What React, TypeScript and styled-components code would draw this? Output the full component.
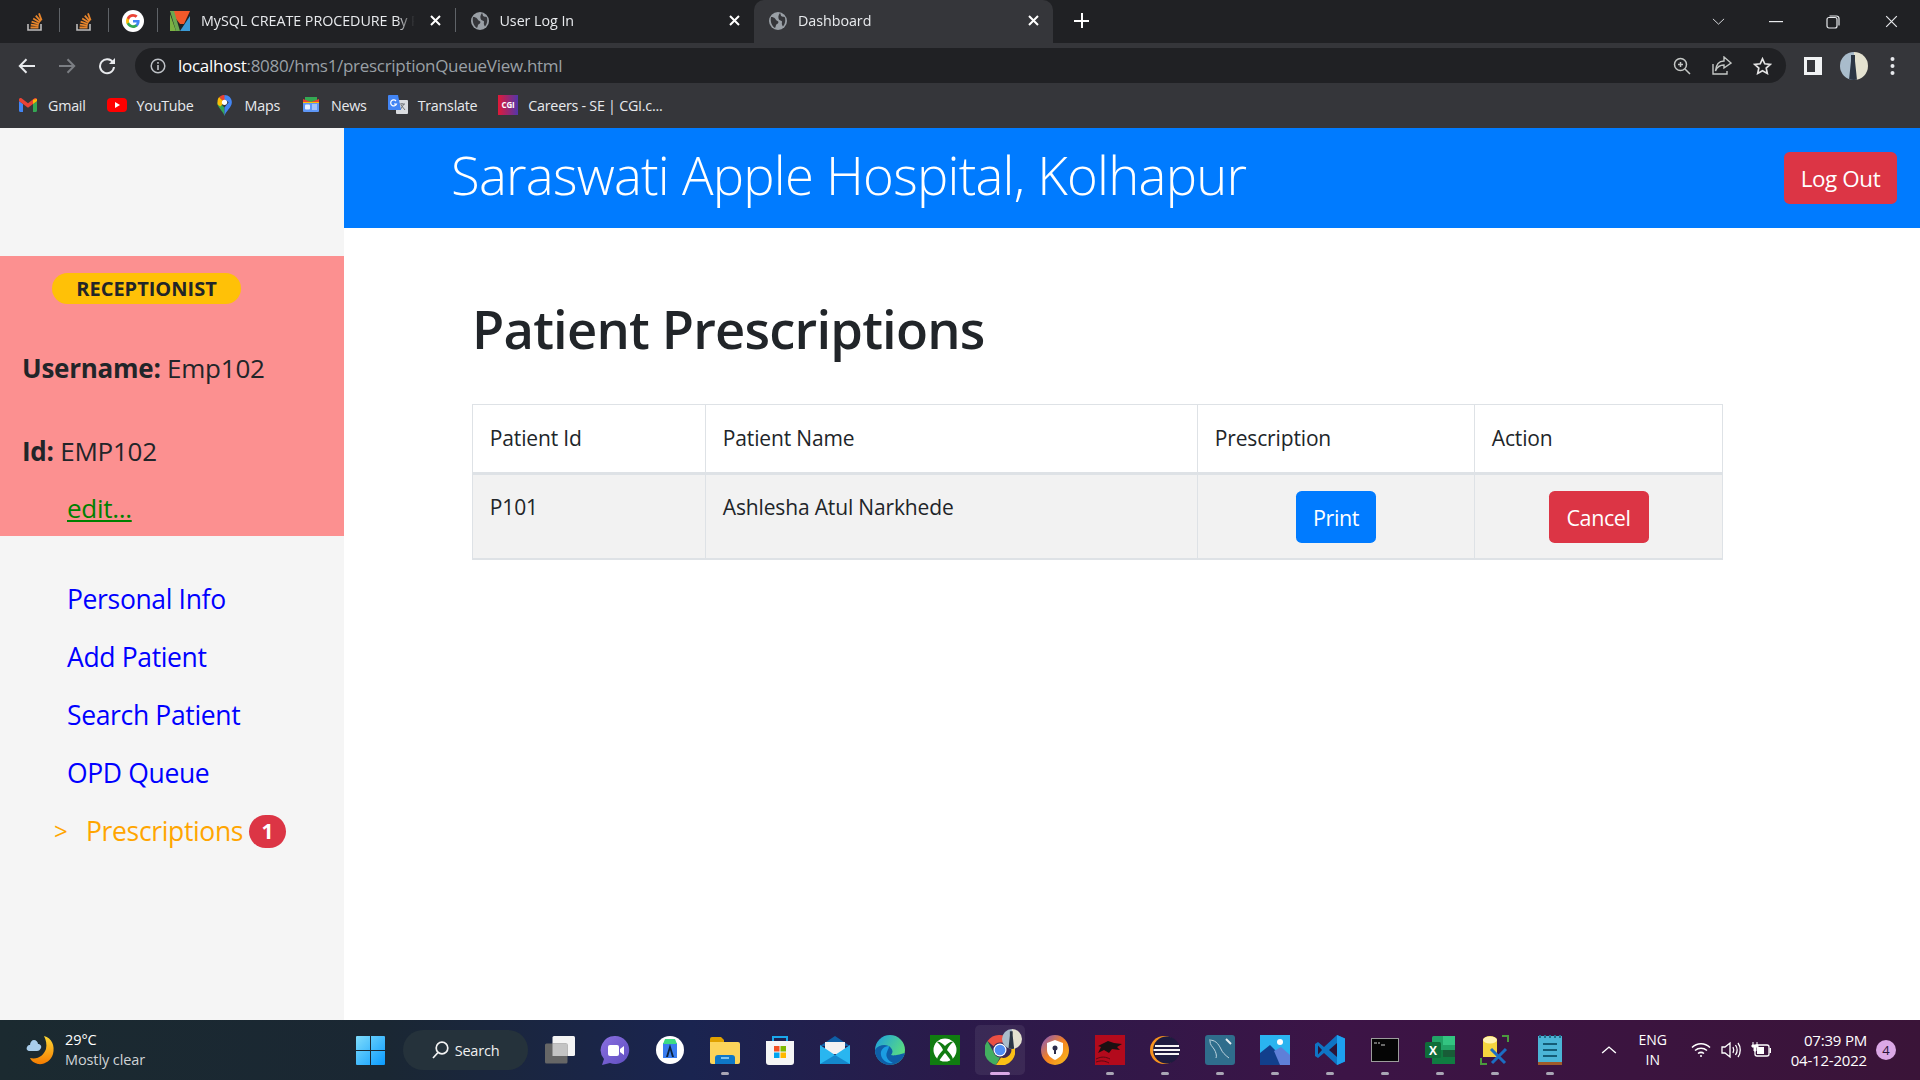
import type { FC, ReactNode } from 'react';
import styled, { createGlobalStyle } from 'styled-components';

const GlobalStyle = createGlobalStyle`
  html, body {
    margin: 0;
    padding: 0;
    overflow: hidden;
  }
  body {
    font-family: "Open Sans", "Noto Sans", sans-serif;
    color: #212529;
  }
  * {
    box-sizing: border-box;
  }
`;

/* ---------- favicons and chrome glyphs ---------- */

const StackIcon = () => (
  <svg width="20" height="22" viewBox="0 0 20 22" fill="none">
    <path d="M3 14v6h13v-6" stroke="#bcbbbb" strokeWidth="1.6" />
    <path d="M5.5 17.5h8M5.8 14.6l7.8 1M6.6 11.6l7.4 2.4M8.2 8.6l6.6 4M10.8 5.6l5 5.8M14 3.4l2.6 7" stroke="#e8852b" strokeWidth="1.8" />
  </svg>
);

const GoogleIcon = () => (
  <svg width="22" height="22" viewBox="0 0 22 22">
    <circle cx="11" cy="11" r="11" fill="#fff" />
    <path d="M17.6 11.2c0-.5 0-.9-.1-1.3H11v2.5h3.7c-.2.9-.6 1.6-1.3 2.1v1.7h2.2c1.3-1.2 2-3 2-5z" fill="#4285f4" />
    <path d="M11 18c1.8 0 3.4-.6 4.6-1.8l-2.2-1.7c-.6.4-1.4.7-2.4.7-1.8 0-3.3-1.2-3.9-2.9H4.8v1.8C5.9 16.4 8.3 18 11 18z" fill="#34a853" />
    <path d="M7.1 12.3c-.3-.9-.3-1.8 0-2.6V7.900H4.800c-1 1.900-1 4.300 0 6.200z" fill="#fbbc05" />
    <path d="M11 6.800c1 0 1.900.4 2.600 1l2-2C14.400 4.700 12.800 4 11 4 8.300 4 5.900 5.600 4.800 7.9l2.300 1.800C7.700 8 9.200 6.800 11 6.800z" fill="#ea4335" />
  </svg>
);

const MysqlTutorialIcon = () => (
  <svg width="20" height="20" viewBox="0 0 20 20">
    <path d="M0 0h20l-6 13H10z" fill="#f0592a" />
    <path d="M20 5v15H10z" fill="#3b9bd6" />
    <path d="M0 3l6 17H0z" fill="#7cb342" />
    <path d="M0 0h4l6 20H6z" fill="#6aa84f" />
  </svg>
);

const GlobeIcon = () => (
  <svg width="18" height="18" viewBox="0 0 18 18">
    <circle cx="9" cy="9" r="9" fill="#9aa0a6" />
    <path d="M2 5c2 0 3 .5 4 1.500s1 2 2.500 2.500 1 2.500-.5 3-1 3-2 4C3 14 1 10 2 5zM11 1c1 1.500.5 3 2 3.500s2 0 3 1c.5 3 .5 6-2 9-1-1.500-1.500-3-1-4.500s-2-1-3-2.500S9 3 11 1z" fill="#35363a" />
  </svg>
);

const CloseGlyph: FC<{ size?: number; color?: string; weight?: number }> = ({ size = 11, color = '#fff', weight = 2 }) => (
  <svg width={size} height={size} viewBox="0 0 11 11">
    <path d="M1 1l9 9M10 1l-9 9" stroke={color} strokeWidth={weight} />
  </svg>
);

const GmailIcon = () => (
  <svg width="18" height="14" viewBox="0 0 18 14">
    <path d="M0 3v9.500A1.500 1.500 0 0 0 1.500 14H4V6z" fill="#4285f4" />
    <path d="M14 6v8h2.500a1.500 1.500 0 0 0 1.500-1.500V3z" fill="#34a853" />
    <path d="M0 1.500C0 .2 1.500-.5 2.500.3L9 5.200 15.500.3C16.500-.5 18 .2 18 1.500V3l-4 3-5 3.800L4 6 0 3z" fill="#ea4335" />
    <path d="M14 1.800L18 1v2l-4 3z" fill="#fbbc05" />
  </svg>
);

const YoutubeIcon = () => (
  <svg width="20" height="14" viewBox="0 0 20 14">
    <rect width="20" height="14" rx="4" fill="#f00" />
    <path d="M8 4l5 3-5 3z" fill="#fff" />
  </svg>
);

const MapsIcon = () => (
  <svg width="15" height="21" viewBox="0 0 14 20">
    <path d="M7 20C5.500 15 0 12 0 7l3 1 4 4c0 3 0 5 0 8z" fill="#34a853" />
    <path d="M2 2L7 7l-4 4-2.500-2C0 6 .5 3.500 2 2z" fill="#fbbc05" />
    <path d="M2 2C4 0 6 0 7 0l1 4-1 3z" fill="#ea4335" />
    <path d="M7 0c4 0 7 3 7 7 0 5-5.500 8-7 13V12l4-5-4-3z" fill="#4285f4" />
    <circle cx="7" cy="7" r="2.500" fill="#fff" />
  </svg>
);

const NewsIcon = () => (
  <svg width="18" height="18" viewBox="0 0 18 18">
    <path d="M3 1h12v5H3z" fill="#34a853" />
    <path d="M1 3l8 3 8-3v4H1z" fill="#ea4335" />
    <rect x="1" y="6" width="16" height="10" rx="1" fill="#5e97f6" />
    <rect x="3" y="8.500" width="5" height="5" rx="1" fill="#e8f0fe" />
    <path d="M10 9h5M10 11h5M10 13h5" stroke="#e8f0fe" />
    <path d="M1 6h16v1H1z" fill="#fbbc05" />
  </svg>
);

const TranslateIcon = () => (
  <svg width="20" height="20" viewBox="0 0 20 20">
    <rect x="8" y="5" width="12" height="14" rx="1" fill="#dadce0" />
    <path d="M11 9h6M14 8v1M12 15l4-6M13 10l4 5" stroke="#70757a" strokeWidth="1" />
    <path d="M1 0h9l3 15H1a1 1 0 0 1-1-1V1a1 1 0 0 1 1-1z" fill="#4285f4" />
    <path d="M8 6a3 3 0 1 0 .5 3H6" stroke="#fff" strokeWidth="1.200" fill="none" />
  </svg>
);

const CgiIcon = () => (
  <svg width="20" height="20" viewBox="0 0 20 20">
    <defs>
      <linearGradient id="cgi-bg" x1="0" x2="1" y1="0" y2="0">
        <stop offset="0" stopColor="#e11937" />
        <stop offset="1" stopColor="#5236ab" />
      </linearGradient>
    </defs>
    <rect width="20" height="20" fill="url(#cgi-bg)" />
    <text x="10" y="13" textAnchor="middle" fontSize="8" fontWeight="700" fill="#fff" fontFamily="Open Sans">CGI</text>
  </svg>
);

const BackIcon: FC<{ flip?: boolean; color: string }> = ({ flip, color }) => (
  <svg width="18" height="16" viewBox="0 0 18 16" style={flip ? { transform: 'scaleX(-1)' } : undefined}>
    <path d="M17 8H2M8.500 1.200L1.800 8l6.700 6.800" stroke={color} strokeWidth="2" fill="none" />
  </svg>
);

const ReloadIcon = () => (
  <svg width="18" height="18" viewBox="0 0 18 18" fill="none">
    <path d="M15 5.500A7 7 0 1 0 16 10" stroke="#e8eaed" strokeWidth="2" />
    <path d="M17 1v6h-6z" fill="#e8eaed" />
  </svg>
);

const InfoIcon = () => (
  <svg width="16" height="16" viewBox="0 0 16 16" fill="none">
    <circle cx="8" cy="8" r="6.800" stroke="#bdc1c6" strokeWidth="1.500" />
    <path d="M8 7v5M8 4v1.800" stroke="#bdc1c6" strokeWidth="1.600" />
  </svg>
);

const ZoomIcon = () => (
  <svg width="18" height="18" viewBox="0 0 18 18" fill="none" stroke="#c4c7c5" strokeWidth="1.500">
    <circle cx="7.500" cy="7.500" r="6" />
    <path d="M12 12l5 5M7.500 5v5M5 7.500h5" />
  </svg>
);

const ShareIcon = () => (
  <svg width="20" height="19" viewBox="0 0 20 19" fill="none" stroke="#c4c7c5" strokeWidth="1.400">
    <path d="M1 8v10h14v-3" />
    <path d="M12 1l7 6-7 5V9C8 9 5 11 3.500 15 4 9 7 5 12 5z" />
  </svg>
);

const StarIcon = () => (
  <svg width="19" height="18" viewBox="0 0 19 18" fill="none" stroke="#e3e3e3" strokeWidth="1.700">
    <path d="M9.500 1.800l2.300 5 5.400.6-4 3.700 1.100 5.300-4.800-2.700-4.800 2.700 1.100-5.300-4-3.700 5.400-.6z" />
  </svg>
);

const SidePanelIcon = () => (
  <svg width="18" height="18" viewBox="0 0 18 18">
    <rect width="18" height="18" fill="#f1f3f4" />
    <rect x="3" y="3" width="8" height="12" fill="#35363a" />
  </svg>
);

const AvatarIcon: FC<{ size: number }> = ({ size }) => (
  <svg width={size} height={size} viewBox="0 0 28 28">
    <defs>
      <clipPath id={`avatar-${size}`}>
        <circle cx="14" cy="14" r="14" />
      </clipPath>
    </defs>
    <g clipPath={`url(#avatar-${size})`}>
      <rect width="14" height="28" fill="#a9bccb" />
      <rect x="14" width="14" height="28" fill="#e4e2d0" />
      <path d="M11 3h4v6l2 19H9l2-19z" fill="#2b3644" />
    </g>
  </svg>
);

const DotsIcon = () => (
  <svg width="5" height="20" viewBox="0 0 5 20" fill="#e8eaed">
    <circle cx="2.500" cy="3" r="2" />
    <circle cx="2.500" cy="10" r="2" />
    <circle cx="2.500" cy="17" r="2" />
  </svg>
);

const ChevronIcon: FC<{ width: number; height: number; color?: string; weight?: number; up?: boolean }> = ({ width, height, color = '#e8eaed', weight = 1, up }) => (
  <svg width={width} height={height} viewBox="0 0 14 8" preserveAspectRatio="none" fill="none">
    <path d={up ? 'M1 7l6-6 6 6' : 'M1 1l6 6 6-6'} stroke={color} strokeWidth={weight} />
  </svg>
);

const WindowMinIcon = () => (
  <svg width="14" height="2" viewBox="0 0 14 2">
    <rect width="14" height="1.200" fill="#e8eaed" />
  </svg>
);

const WindowRestoreIcon = () => (
  <svg width="14" height="14" viewBox="0 0 14 14" fill="none" stroke="#e8eaed" strokeWidth="1.200">
    <rect x="1" y="2.500" width="10" height="10.500" rx="2" />
    <path d="M3.500 1h7A2.500 2.500 0 0 1 13 3.500v7" />
  </svg>
);

/* ---------- taskbar icons ---------- */

const MoonIcon = () => (
  <svg width="30" height="32" viewBox="0 0 30 32">
    <defs>
      <linearGradient id="moon-fill" x1="0" y1="0" x2="0" y2="1">
        <stop offset="0" stopColor="#fdd835" />
        <stop offset="1" stopColor="#f57c00" />
      </linearGradient>
    </defs>
    <path d="M18 2c8 2 11 10 9 18-2 7-9 11-15 10-4-1-7-3-8-6 8 2 14-3 16-9 1-5 0-9-2-13z" fill="url(#moon-fill)" />
    <path d="M4 17c-3 0-4-2-3-4s2-2 3-2c0-3 2-5 4-5s4 2 4 4c2 0 4 2 3 4s-2 3-4 3z" fill="#a9cdeb" />
  </svg>
);

const StartIcon = () => (
  <svg width="29" height="29" viewBox="0 0 29 29">
    <defs>
      <linearGradient id="start-fill" x1="0" y1="0" x2="1" y2="1">
        <stop offset="0" stopColor="#7fdcfb" />
        <stop offset="1" stopColor="#0a9bff" />
      </linearGradient>
    </defs>
    <path d="M0 1a1 1 0 0 1 1-1h13v14H0zM15 0h13a1 1 0 0 1 1 1v13H15zM0 15h14v14H1a1 1 0 0 1-1-1zM15 15h14v13a1 1 0 0 1-1 1H15z" fill="url(#start-fill)" />
  </svg>
);

const SearchGlyph = () => (
  <svg width="17" height="18" viewBox="0 0 17 18" fill="none" stroke="#f3f3f3" strokeWidth="1.700">
    <circle cx="10" cy="7" r="5.800" />
    <path d="M6 11.500L1 17" />
  </svg>
);

const TaskViewIcon = () => (
  <svg width="30" height="28" viewBox="0 0 30 28">
    <rect x="7.500" y="0" width="22.500" height="20" rx="1.500" fill="#f4f4f4" />
    <rect x="0" y="7.500" width="22.500" height="20" rx="1.500" fill="#666" />
    <rect x="7.500" y="7.500" width="15" height="12.500" fill="#c4c4c4" />
  </svg>
);

const ChatIcon = () => (
  <svg width="30" height="30" viewBox="0 0 30 30">
    <defs>
      <linearGradient id="chat-fill" x1="0" y1="0" x2="1" y2="1">
        <stop offset="0" stopColor="#8a6fe0" />
        <stop offset="1" stopColor="#5f4ec0" />
      </linearGradient>
    </defs>
    <path d="M15 1a14 14 0 1 1-5 27l-8 2 2-6A14 14 0 0 1 15 1z" fill="url(#chat-fill)" />
    <rect x="8" y="10" width="11" height="11" rx="2" fill="#fff" />
    <path d="M20 14l4-3v9l-4-3z" fill="#fff" />
  </svg>
);

const StudioIcon = () => (
  <svg width="28" height="28" viewBox="0 0 28 28">
    <circle cx="14" cy="14" r="14" fill="#fff" />
    <path d="M7 7h14v15H7z" fill="#3a7df0" />
    <path d="M9 3h10l2 5H7z" fill="#3ddc84" />
    <path d="M14 8l-4 13h2l2-7 2 7h2z" fill="#0c2340" />
  </svg>
);

const FolderIcon = () => (
  <svg width="30" height="27" viewBox="0 0 30 27">
    <path d="M0 2a2 2 0 0 1 2-2h9l3 3v4H0z" fill="#e0a100" />
    <path d="M0 5h28a2 2 0 0 1 2 2v18a2 2 0 0 1-2 2H2a2 2 0 0 1-2-2z" fill="#fcd45a" />
    <path d="M5 27v-6a3 3 0 0 1 3-3h14a3 3 0 0 1 3 3v6z" fill="#0f78c8" />
    <rect x="11" y="20" width="8" height="2" fill="#7fc4ef" />
  </svg>
);

const StoreIcon = () => (
  <svg width="30" height="30" viewBox="0 0 30 30">
    <path d="M8 7V2h14v5" fill="none" stroke="#1aa7ec" strokeWidth="2" />
    <path d="M1 6h28v21a3 3 0 0 1-3 3H4a3 3 0 0 1-3-3z" fill="#f5f5f5" />
    <rect x="9" y="11" width="5.500" height="5.500" fill="#f25022" />
    <rect x="15.500" y="11" width="5.500" height="5.500" fill="#7fba00" />
    <rect x="9" y="17.500" width="5.500" height="5.500" fill="#00a4ef" />
    <rect x="15.500" y="17.500" width="5.500" height="5.500" fill="#ffb900" />
  </svg>
);

const MailIcon = () => (
  <svg width="30" height="28" viewBox="0 0 30 28">
    <path d="M15 0l15 10H0z" fill="#0f5fa6" />
    <path d="M5 6h20v12H5z" fill="#f2f2f2" />
    <path d="M0 9l15 10L30 9v19H0z" fill="#29b6f0" />
    <path d="M0 28l15-9 15 9z" fill="#1488cc" />
  </svg>
);

const EdgeIcon = () => (
  <svg width="30" height="30" viewBox="0 0 30 30">
    <defs>
      <linearGradient id="edge-top" x1="0" y1="0" x2="1" y2="0.600">
        <stop offset="0" stopColor="#1b9de2" />
        <stop offset="1" stopColor="#5ee07a" />
      </linearGradient>
    </defs>
    <circle cx="15" cy="15" r="15" fill="url(#edge-top)" />
    <path d="M30 18c-2 8-9 12-15 12C6 30 0 23 0 15c3-5 12-7 16-2 2 2 2 5 0 7 3 1 6 0 14-2z" fill="#0f5ea8" />
    <path d="M14 11c-5 0-9 4-8 9 1 5 6 9 12 8-5-2-8-7-6-11 1-3 2-4 2-6z" fill="#1b9de2" />
  </svg>
);

const XboxIcon = () => (
  <svg width="30" height="30" viewBox="0 0 30 30">
    <rect width="30" height="30" fill="#107c10" />
    <circle cx="15" cy="15" r="11.500" fill="#fff" />
    <path d="M15 11c-3-3-6-5-8-4 3 3 5 5 6 8-3 3-6 7-6 10l2 1c2-3 4-6 6-8 2 2 4 5 6 8l2-1c0-3-3-7-6-10 1-3 3-5 6-8-2-1-5 1-8 4z" fill="#107c10" />
  </svg>
);

const ChromeIcon = () => (
  <svg width="30" height="30" viewBox="0 0 30 30">
    <path d="M15 0a15 15 0 0 1 13 7.500H15a7.500 7.500 0 0 0-6.500 3.800L2.500 6A15 15 0 0 1 15 0z" fill="#ea4335" />
    <path d="M2.500 6l6 11a7.500 7.500 0 0 0 6.500 5.500L11 30A15 15 0 0 1 2.500 6z" fill="#34a853" />
    <path d="M28 7.500A15 15 0 0 1 11 30l5-7.500a7.500 7.500 0 0 0 5-15z" fill="#fbbc05" />
    <circle cx="15" cy="15" r="6.500" fill="#fff" />
    <circle cx="15" cy="15" r="5.300" fill="#4285f4" />
  </svg>
);

const AvastIcon = () => (
  <svg width="28" height="30" viewBox="0 0 28 30">
    <defs>
      <linearGradient id="shield-fill" x1="0" y1="0" x2="1" y2="1">
        <stop offset="0" stopColor="#7b55d0" />
        <stop offset="0.500" stopColor="#f58220" />
        <stop offset="1" stopColor="#f6c21c" />
      </linearGradient>
    </defs>
    <ellipse cx="14" cy="15" rx="14" ry="15" fill="url(#shield-fill)" />
    <path d="M14 5l8 3v7c0 5-4 8-8 10-4-2-8-5-8-10V8z" fill="#fff" />
    <circle cx="14" cy="13" r="2.500" fill="#2b2b4a" />
    <rect x="13" y="14" width="2" height="5" fill="#2b2b4a" />
  </svg>
);

const WorkbenchDolphinIcon = () => (
  <svg width="30" height="30" viewBox="0 0 30 30">
    <rect width="30" height="30" fill="#b30a1c" />
    <path d="M3 11l10-5 6 2 8 1-5 3 3 3-8-1-3 4-5-3-6 3 3-6z" fill="#1b1012" />
    <path d="M1 24c6-3 10-2 14 0M1 27c6-2 9-1 13 1" stroke="#5a0912" fill="none" />
  </svg>
);

const EclipseIcon = () => (
  <svg width="30" height="30" viewBox="0 0 30 30">
    <circle cx="14" cy="15" r="14" fill="#f7941e" />
    <circle cx="16.500" cy="15" r="13.500" fill="#1d1b3f" />
    <path d="M5 11h24M3.500 15h26.500M5 19h24" stroke="#f4f4f4" strokeWidth="2" />
  </svg>
);

const WorkbenchIcon = () => (
  <svg width="30" height="30" viewBox="0 0 30 30">
    <rect width="30" height="30" rx="3" fill="#2f6d8c" />
    <path d="M4 5c6 0 9 3 12 9 1 3 4 6 8 9M5 6c0 4 2 5 4 8s3 7 2 9" fill="none" stroke="#bcd3de" strokeWidth="1" />
    <path d="M21 4l5 5" stroke="#e6eef2" strokeWidth="2" />
  </svg>
);

const PhotosIcon = () => (
  <svg width="30" height="30" viewBox="0 0 30 30">
    <rect width="30" height="30" fill="#2ab4f0" />
    <circle cx="20" cy="7" r="3" fill="#fff" />
    <path d="M0 18l10-8 20 20H0z" fill="#123f8c" />
    <path d="M14 16l7-4 9 8v10H20z" fill="#5f7fd8" />
  </svg>
);

const VsCodeIcon = () => (
  <svg width="30" height="30" viewBox="0 0 30 30">
    <path d="M22 0l8 3.500v23L22 30 9 18l-6 5-3-2v-12l3-2 6 5z" fill="#0f74c4" />
    <path d="M22 0l8 3.500v23L22 30z" fill="#1ea0ef" />
    <path d="M22 8l-8 7 8 7z" fill="#2b1438" />
    <path d="M3 10.500L7 15l-4 4.500z" fill="#2b1438" />
  </svg>
);

const TerminalIcon = () => (
  <svg width="28" height="24" viewBox="0 0 28 24">
    <rect width="28" height="24" fill="#9c9c9c" />
    <rect x="1" y="1" width="26" height="22" fill="#050505" />
    <path d="M3 5h3M7 5h2M10 7h4" stroke="#cfcfcf" strokeWidth="1" />
  </svg>
);

const ExcelIcon = () => (
  <svg width="30" height="28" viewBox="0 0 30 28">
    <rect x="7" width="23" height="28" rx="1.500" fill="#21a366" />
    <rect x="18" width="12" height="9" fill="#33c481" />
    <rect x="7" y="14" width="23" height="14" fill="#107c41" />
    <rect x="18" y="14" width="12" height="7" fill="#185c37" />
    <rect y="6" width="16" height="16" rx="1.500" fill="#0f6d3a" />
    <text x="8" y="19" textAnchor="middle" fontSize="12" fontWeight="700" fill="#fff" fontFamily="Open Sans">X</text>
  </svg>
);

const DbToolIcon = () => (
  <svg width="30" height="30" viewBox="0 0 30 30">
    <path d="M3 5a7 4 0 0 1 14 0v17H3z" fill="#f5d43f" />
    <path d="M3 5a7 3.500 0 0 0 14 0 7 3.500 0 0 0-14 0z" fill="#fff2b0" />
    <path d="M22 1h6v6M1 23v6h6" fill="none" stroke="#4b9a3d" strokeWidth="2" />
    <path d="M11 14l14 14M26 14L12 28" stroke="#1b6ec2" strokeWidth="3" />
  </svg>
);

const NotepadIcon = () => (
  <svg width="24" height="30" viewBox="0 0 24 30">
    <rect y="1" width="24" height="28" fill="#4bb4d6" />
    <rect y="27" width="24" height="3" fill="#a05a2a" />
    <path d="M2 0v3M7 0v3M12 0v3M17 0v3M22 0v3" stroke="#1f6f8b" strokeWidth="2" />
    <path d="M5 9h14M5 15h14M5 21h14" stroke="#145b75" strokeWidth="2" />
  </svg>
);

const WifiIcon = () => (
  <svg width="20" height="16" viewBox="0 0 20 16" fill="none" stroke="#fff" strokeWidth="1.500">
    <path d="M1 5.500c5-5 13-5 18 0M4 8.500c3.500-3 8.500-3 12 0M7 11.500c2-1.500 4-1.500 6 0" />
    <circle cx="10" cy="14" r="1" fill="#fff" stroke="none" />
  </svg>
);

const VolumeIcon = () => (
  <svg width="20" height="18" viewBox="0 0 20 18" fill="none" stroke="#fff" strokeWidth="1.300">
    <path d="M1 6h3l5-4v14l-5-4H1zM12 6c1 2 1 4 0 6M14.500 4c2 3 2 7 0 10M17 2c3 4 3 10 0 14" />
  </svg>
);

const BatteryIcon = () => (
  <svg width="20" height="18" viewBox="0 0 20 18">
    <rect x="4" y="4" width="14" height="11" rx="2" fill="none" stroke="#fff" strokeWidth="1.300" />
    <rect x="6" y="6" width="7" height="7" fill="#fff" />
    <rect x="18.500" y="7" width="1.500" height="5" fill="#fff" />
    <path d="M1 4h6v2H5v4H3V6H1zM2 1v3M6 1v3" stroke="#fff" fill="#fff" strokeWidth="1" />
  </svg>
);

/* ---------- browser chrome ---------- */

const TabStrip = styled.div`
  display: flex;
  align-items: stretch;
  height: 43px;
  padding-left: 11px;
  background: #202124;
`;

const PinnedTab = styled.div`
  display: flex;
  align-items: center;
  justify-content: center;
  width: 48px;
  padding-bottom: 1px;
`;

const Divider = styled.span`
  flex: none;
  align-self: center;
  width: 1px;
  height: 24px;
  margin-top: -3px;
  background: #5f6368;
`;

const Tab = styled.div<{ $active?: boolean; $width: number; $lead: number }>`
  display: flex;
  align-items: center;
  flex: none;
  gap: 11px;
  width: ${(p) => p.$width}px;
  padding: 0 14.500px 2px ${(p) => p.$lead}px;
  border-radius: ${(p) => (p.$active ? '10px 10px 0 0' : '0')};
  background: ${(p) => (p.$active ? '#35363a' : 'transparent')};
`;

const TabTitle = styled.span`
  flex: 1;
  min-width: 0;
  overflow: hidden;
  white-space: nowrap;
  font-size: 14.300px;
  letter-spacing: -0.05px;
  color: #e8eaed;
  -webkit-mask-image: linear-gradient(90deg, #000 90%, transparent 98%);
`;

const NewTab = styled.span`
  margin: 0 0 2px 21px;
  align-self: center;
  width: 15px;
  height: 15px;
  background:
    linear-gradient(#fff, #fff) center / 15px 2px no-repeat,
    linear-gradient(#fff, #fff) center / 2px 15px no-repeat;
`;

const WindowControls = styled.div`
  display: flex;
  align-items: center;
  margin-left: auto;
`;

const WindowButton = styled.span<{ $width: number }>`
  display: flex;
  align-items: center;
  justify-content: center;
  width: ${(p) => p.$width}px;
  height: 38px;
`;

const Toolbar = styled.div`
  display: flex;
  align-items: center;
  height: 47px;
  padding: 0 25.500px 2px 18px;
  background: #35363a;
`;

const NavButtons = styled.div`
  display: flex;
  align-items: center;
  gap: 22px;
  margin-right: 19px;
`;

const AddressBar = styled.div`
  display: flex;
  align-items: center;
  flex: 1;
  height: 35px;
  padding: 0 14px 0 15px;
  border-radius: 18px;
  background: #202124;
`;

const UrlText = styled.span`
  margin-left: 12px;
  font-size: 17px;
  letter-spacing: -0.3px;
  color: #9aa0a6;

  b {
    font-weight: 400;
    color: #fff;
  }
`;

const AddressActions = styled.div`
  display: flex;
  align-items: center;
  gap: 21px;
  margin-left: auto;
`;

const ToolbarEnd = styled.div`
  display: flex;
  align-items: center;
  margin-left: 18px;
  gap: 18px;

  > svg:last-child {
    margin-left: 4px;
  }
`;

const BookmarkBar = styled.div`
  display: flex;
  align-items: center;
  gap: 21px;
  height: 38px;
  padding: 0 0 8px 18px;
  background: #35363a;
`;

const Bookmark = styled.span`
  display: flex;
  align-items: center;
  gap: 10px;
  font-size: 14.300px;
  letter-spacing: -0.25px;
  color: #e8eaed;
`;

const BookmarkGlyph = styled.span`
  display: flex;
  align-items: center;
  justify-content: center;
  width: 20px;
  height: 22px;
`;

/* ---------- page ---------- */

const Screen = styled.div`
  display: flex;
  flex-direction: column;
  width: 1920px;
  height: 1080px;
  overflow: hidden;
  background: #fff;
`;

const Body = styled.div`
  display: flex;
  flex: 1;
  min-height: 0;
`;

const Sidebar = styled.aside`
  flex: none;
  width: 344px;
  padding-top: 128px;
  background: #f5f5f5;
`;

const ProfileCard = styled.div`
  height: 280px;
  padding-top: 17px;
  background: #fc9090;
`;

const RolePill = styled.div`
  width: 189px;
  height: 31px;
  margin-left: 52px;
  border-radius: 16px;
  background: #ffc107;
  text-align: center;
  font-size: 20px;
  font-weight: 700;
  line-height: 31px;
`;

const ProfileLine = styled.p`
  margin: 0 0 46px 22px;
  font-size: 26px;
  line-height: 37px;
  letter-spacing: -0.25px;

  &:first-of-type {
    margin-top: 46px;
  }

  b {
    font-weight: 700;
  }
`;

const EditLink = styled.a`
  display: block;
  margin: -26px 0 0 67px;
  font-size: 26px;
  line-height: 37px;
  letter-spacing: -0.3px;
  color: #008000;
  text-decoration: underline;
`;

const NavList = styled.nav`
  display: flex;
  flex-direction: column;
  gap: 19px;
  padding: 43px 0 0 67px;
`;

const NavItem = styled.a<{ $current?: boolean }>`
  position: relative;
  display: flex;
  align-items: center;
  height: 39px;
  padding-left: ${(p) => (p.$current ? '19px' : '0')};
  font-size: 26.500px;
  letter-spacing: -0.35px;
  color: ${(p) => (p.$current ? '#ffa500' : '#0000ff')};
`;

const NavMarker = styled.span`
  position: absolute;
  left: -13px;
  font-size: 24px;
  letter-spacing: 0;
`;

const NavBadge = styled.span`
  display: inline-block;
  width: 37px;
  height: 33px;
  margin: 2px 0 0 6px;
  border-radius: 17px;
  background: #dc3545;
  text-align: center;
  font-size: 21px;
  font-weight: 700;
  line-height: 33px;
  letter-spacing: 0;
  color: #fff;
`;

const Main = styled.main`
  flex: 1;
  min-width: 0;
`;

const Banner = styled.header`
  display: flex;
  align-items: center;
  justify-content: space-between;
  height: 100px;
  padding: 0 23px 0 107px;
  background: #007bff;
`;

const BannerTitle = styled.h1`
  margin: 0 0 8px;
  font-size: 52.600px;
  font-weight: 300;
  letter-spacing: -0.75px;
  color: #fff;
`;

const Button = styled.button<{ $tone: 'blue' | 'red'; $width: number }>`
  width: ${(p) => p.$width}px;
  height: 52px;
  padding: 0;
  border: 0;
  border-radius: 5.600px;
  background: ${(p) => (p.$tone === 'blue' ? '#007bff' : '#dc3545')};
  font-family: inherit;
  font-size: 21.500px;
  letter-spacing: -0.4px;
  color: #fff;
`;

const LogOutButton = styled(Button)`
  font-size: 22.400px;
`;

const Content = styled.section`
  padding: 0 0 0 128px;
`;

const PageTitle = styled.h2`
  margin: 0;
  padding: 67px 0 0;
  font-size: 52.500px;
  font-weight: 600;
  line-height: 67px;
  letter-spacing: -0.8px;
`;

const Table = styled.table`
  width: 1250px;
  margin-top: 42px;
  border-collapse: collapse;
  table-layout: fixed;
  font-size: 21px;
  letter-spacing: -0.15px;

  th, td {
    border: 1.400px solid #dee2e6;
    padding: 16.800px;
    text-align: left;
    vertical-align: top;
    font-weight: 400;
    line-height: 33px;
  }

  thead th {
    border-bottom: 3px solid #dee2e6;
  }

  tbody tr {
    background: #f2f2f2;
  }

  tbody td {
    border-bottom-width: 2px;
    padding-bottom: 15px;
  }
`;

const ActionCell = styled.td`
  button {
    display: block;
    margin: 0 auto;
  }
`;

/* ---------- taskbar ---------- */

const Taskbar = styled.footer`
  display: flex;
  align-items: center;
  flex: none;
  height: 60px;
  background: linear-gradient(90deg, #1b2a30 0%, #1a2733 20%, #1a2450 36%, #2b1a4a 50%, #3c1446 70%, #3a1438 100%);
`;

const Weather = styled.div`
  display: flex;
  align-items: center;
  gap: 9px;
  flex: none;
  width: 343px;
  padding-left: 26px;
`;

const WeatherText = styled.div`
  font-size: 14.500px;
  line-height: 20px;
  letter-spacing: -0.1px;
  color: #fff;

  span {
    display: block;
    color: #cfd3d6;
  }
`;

const TaskSlot = styled.div`
  position: relative;
  display: flex;
  align-items: center;
  justify-content: center;
  flex: none;
  width: 55px;
  height: 60px;
`;

const ActiveSlotBack = styled.span`
  position: absolute;
  left: 2.500px;
  top: 5px;
  width: 50px;
  height: 50px;
  border-radius: 5px;
  background: rgba(255, 255, 255, 0.07);
`;

const RunDot = styled.span<{ $active?: boolean }>`
  position: absolute;
  left: 50%;
  bottom: 5px;
  width: ${(p) => (p.$active ? '20px' : '8px')};
  height: 3.500px;
  border-radius: 2px;
  background: ${(p) => (p.$active ? '#dba8e6' : '#a9a6b5')};
  transform: translateX(-50%);
`;

const SlotOverlay = styled.span`
  position: absolute;
  top: 9px;
  right: 6px;
  line-height: 0;
`;

const SearchPill = styled.div`
  display: flex;
  align-items: center;
  justify-content: center;
  gap: 6px;
  flex: none;
  width: 125px;
  height: 40px;
  margin: 0 4.500px 0 5px;
  border-radius: 20px;
  background: #25323b;
  font-size: 14.500px;
  letter-spacing: -0.2px;
  color: #f0f0f0;
`;

const Tray = styled.div`
  display: flex;
  align-items: center;
  flex: 1;
  justify-content: flex-end;
  padding-right: 24px;
  color: #fff;
`;

const TrayLang = styled.div`
  width: 44px;
  margin: 0 16px 0 14px;
  text-align: center;
  font-size: 14px;
  line-height: 20px;
`;

const TrayIcons = styled.div`
  display: flex;
  align-items: center;
  gap: 10px;
`;

const Clock = styled.div`
  margin-left: 20px;
  text-align: right;
  font-size: 15px;
  line-height: 20px;
  letter-spacing: -0.2px;
  white-space: nowrap;
`;

const NotifyBadge = styled.span`
  flex: none;
  width: 20px;
  height: 20px;
  margin-left: 9px;
  border-radius: 50%;
  background: #dba8e6;
  text-align: center;
  font-size: 13px;
  line-height: 20px;
  color: #2b1438;
`;

const taskIcons: { icon: ReactNode; dot?: boolean; active?: boolean; overlay?: boolean }[] = [
  { icon: <TaskViewIcon /> },
  { icon: <ChatIcon /> },
  { icon: <StudioIcon /> },
  { icon: <FolderIcon />, dot: true },
  { icon: <StoreIcon /> },
  { icon: <MailIcon /> },
  { icon: <EdgeIcon /> },
  { icon: <XboxIcon /> },
  { icon: <ChromeIcon />, active: true, overlay: true },
  { icon: <AvastIcon /> },
  { icon: <WorkbenchDolphinIcon />, dot: true },
  { icon: <EclipseIcon />, dot: true },
  { icon: <WorkbenchIcon />, dot: true },
  { icon: <PhotosIcon />, dot: true },
  { icon: <VsCodeIcon />, dot: true },
  { icon: <TerminalIcon />, dot: true },
  { icon: <ExcelIcon />, dot: true },
  { icon: <DbToolIcon />, dot: true },
  { icon: <NotepadIcon />, dot: true },
];

const bookmarks: { icon: ReactNode; label: string }[] = [
  { icon: <GmailIcon />, label: 'Gmail' },
  { icon: <YoutubeIcon />, label: 'YouTube' },
  { icon: <MapsIcon />, label: 'Maps' },
  { icon: <NewsIcon />, label: 'News' },
  { icon: <TranslateIcon />, label: 'Translate' },
  { icon: <CgiIcon />, label: 'Careers - SE | CGI.c...' },
];

const navLinks = ['Personal Info', 'Add Patient', 'Search Patient', 'OPD Queue'];

export default function App() {
  return (
    <Screen>
      <GlobalStyle />
      <TabStrip>
        <PinnedTab><StackIcon /></PinnedTab>
        <Divider />
        <PinnedTab><StackIcon /></PinnedTab>
        <Divider />
        <PinnedTab><GoogleIcon /></PinnedTab>
        <Divider />
        <Tab $width={297} $lead={12}>
          <MysqlTutorialIcon />
          <TabTitle>MySQL CREATE PROCEDURE By P</TabTitle>
          <CloseGlyph />
        </Tab>
        <Divider />
        <Tab $width={298} $lead={14.5}>
          <GlobeIcon />
          <TabTitle>User Log In</TabTitle>
          <CloseGlyph />
        </Tab>
        <Tab $active $width={299} $lead={15}>
          <GlobeIcon />
          <TabTitle>Dashboard</TabTitle>
          <CloseGlyph />
        </Tab>
        <NewTab />
        <WindowControls>
          <WindowButton $width={58}><ChevronIcon width={13} height={7} /></WindowButton>
          <WindowButton $width={57}><WindowMinIcon /></WindowButton>
          <WindowButton $width={58}><WindowRestoreIcon /></WindowButton>
          <WindowButton $width={58}><CloseGlyph size={13} color="#e8eaed" weight={1} /></WindowButton>
        </WindowControls>
      </TabStrip>
      <Toolbar>
        <NavButtons>
          <BackIcon color="#e8eaed" />
          <BackIcon flip color="#7b7e83" />
          <ReloadIcon />
        </NavButtons>
        <AddressBar>
          <InfoIcon />
          <UrlText><b>localhost</b>:8080/hms1/prescriptionQueueView.html</UrlText>
          <AddressActions>
            <ZoomIcon />
            <ShareIcon />
            <StarIcon />
          </AddressActions>
        </AddressBar>
        <ToolbarEnd>
          <SidePanelIcon />
          <AvatarIcon size={28} />
          <DotsIcon />
        </ToolbarEnd>
      </Toolbar>
      <BookmarkBar>
        {bookmarks.map((b) => (
          <Bookmark key={b.label}>
            <BookmarkGlyph>{b.icon}</BookmarkGlyph>
            {b.label}
          </Bookmark>
        ))}
      </BookmarkBar>

      <Body>
        <Sidebar>
          <ProfileCard>
            <RolePill>RECEPTIONIST</RolePill>
            <ProfileLine><b>Username:</b> Emp102</ProfileLine>
            <ProfileLine><b>Id:</b> EMP102</ProfileLine>
            <EditLink>edit...</EditLink>
          </ProfileCard>
          <NavList>
            {navLinks.map((link) => (
              <NavItem key={link}>{link}</NavItem>
            ))}
            <NavItem $current>
              <NavMarker>&gt;</NavMarker>
              Prescriptions
              <NavBadge>1</NavBadge>
            </NavItem>
          </NavList>
        </Sidebar>
        <Main>
          <Banner>
            <BannerTitle>Saraswati Apple Hospital, Kolhapur</BannerTitle>
            <LogOutButton $tone="red" $width={113}>Log Out</LogOutButton>
          </Banner>
          <Content>
            <PageTitle>Patient Prescriptions</PageTitle>
            <Table>
              <colgroup>
                <col style={{ width: 233 }} />
                <col style={{ width: 492 }} />
                <col style={{ width: 277 }} />
                <col style={{ width: 248 }} />
              </colgroup>
              <thead>
                <tr>
                  <th>Patient Id</th>
                  <th>Patient Name</th>
                  <th>Prescription</th>
                  <th>Action</th>
                </tr>
              </thead>
              <tbody>
                <tr>
                  <td>P101</td>
                  <td>Ashlesha Atul Narkhede</td>
                  <ActionCell><Button $tone="blue" $width={80}>Print</Button></ActionCell>
                  <ActionCell><Button $tone="red" $width={100}>Cancel</Button></ActionCell>
                </tr>
              </tbody>
            </Table>
          </Content>
        </Main>
      </Body>

      <Taskbar>
        <Weather>
          <MoonIcon />
          <WeatherText>
            29°C
            <span>Mostly clear</span>
          </WeatherText>
        </Weather>
        <TaskSlot><StartIcon /></TaskSlot>
        <SearchPill>
          <SearchGlyph />
          Search
        </SearchPill>
        {taskIcons.map((item, i) => (
          <TaskSlot key={i}>
            {item.active && <ActiveSlotBack />}
            {item.icon}
            {item.overlay && <SlotOverlay><AvatarIcon size={20} /></SlotOverlay>}
            {(item.dot || item.active) && <RunDot $active={item.active} />}
          </TaskSlot>
        ))}
        <Tray>
          <ChevronIcon up width={16} height={8} color="#fff" weight={1.2} />
          <TrayLang>ENG<br />IN</TrayLang>
          <TrayIcons>
            <WifiIcon />
            <VolumeIcon />
            <BatteryIcon />
          </TrayIcons>
          <Clock>07:39 PM<br />04-12-2022</Clock>
          <NotifyBadge>4</NotifyBadge>
        </Tray>
      </Taskbar>
    </Screen>
  );
}
